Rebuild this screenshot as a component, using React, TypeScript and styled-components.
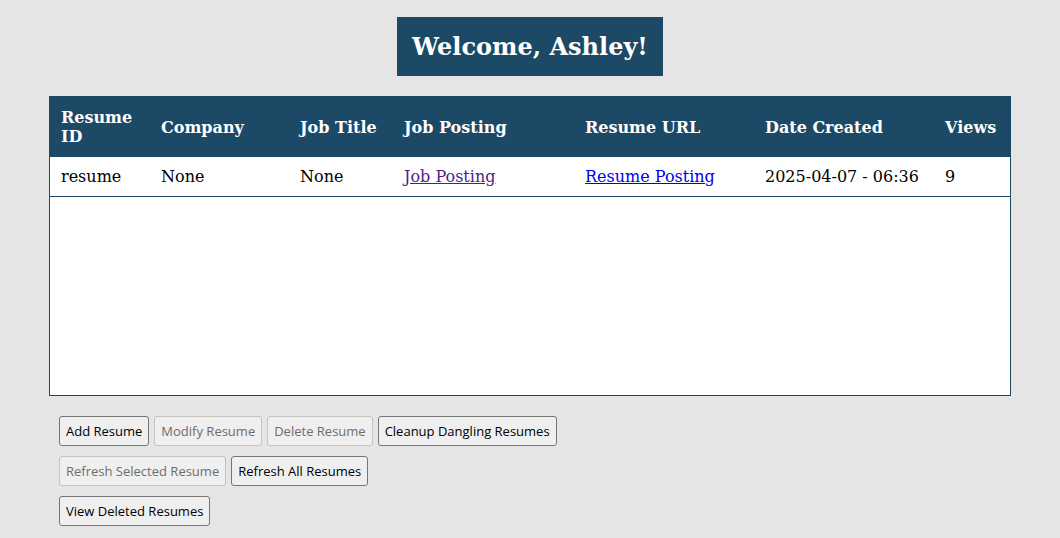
import React from "react";
import styled, { createGlobalStyle } from "styled-components";

const Global = createGlobalStyle`
  html, body { margin: 0; padding: 0; background: #e5e5e5; }
  body { font-family: "DejaVu Serif", serif; }
`;

const Page = styled.div`
  width: 962px;
  margin: 0 auto;
  padding-top: 17px;
  display: flex;
  flex-direction: column;
  align-items: center;
`;

const Banner = styled.h1`
  margin: 0 0 20px;
  background: #1c4966;
  color: #fff;
  font-family: "DejaVu Serif", serif;
  font-weight: bold;
  font-size: 24px;
  line-height: 59px;
  height: 59px;
  padding: 0 15px;
`;

const TableBox = styled.div`
  align-self: stretch;
  height: 298px;
  background: #fff;
  border: 1px solid #1c4966;
  overflow: auto;
`;

const Table = styled.table`
  width: 100%;
  border-collapse: collapse;
  table-layout: fixed;
  font-family: "DejaVu Serif", serif;
  font-size: 16px;
`;

const Th = styled.th<{ $w: number }>`
  width: ${(p) => p.$w}px;
  background: #1c4966;
  color: #fff;
  font-weight: bold;
  text-align: left;
  padding: 10px 11px;
  line-height: 19px;
  height: 60px;
  box-sizing: border-box;
`;

const Td = styled.td`
  padding: 10px 11px;
  line-height: 19px;
  color: #000;
  border-bottom: 1px solid #1c4966;
`;

const Link = styled.a<{ $visited?: boolean }>`
  color: ${(p) => (p.$visited ? "#551a8b" : "#0000ee")};
  text-decoration: underline;
`;

const Actions = styled.div`
  align-self: stretch;
  padding: 20px 10px 0;
  display: flex;
  flex-direction: column;
  gap: 10px;
`;

const Row = styled.div`
  display: flex;
  gap: 5px;
`;

const Btn = styled.button`
  font-family: "Open Sans", "Noto Sans", sans-serif;
  font-size: 13px;
  height: 30px;
  padding: 0 6px;
  background: #efefef;
  color: #000;
  border: 1px solid #767676;
  border-radius: 3px;
  &:disabled {
    color: #6d6d6d;
    border-color: #c3c3c3;
    background: #efefef;
  }
`;

const cols: [string, number][] = [
  ["Resume ID", 100],
  ["Company", 139],
  ["Job Title", 104],
  ["Job Posting", 181],
  ["Resume URL", 180],
  ["Date Created", 180],
  ["Views", 76],
];

export default function App() {
  return (
    <>
      <Global />
      <Page>
        <Banner>Welcome, Ashley!</Banner>
        <TableBox>
          <Table>
            <thead>
              <tr>
                {cols.map(([c, w]) => (
                  <Th key={c} $w={w}>
                    {c === "Resume ID" ? (
                      <>
                        Resume
                        <br />
                        ID
                      </>
                    ) : (
                      c
                    )}
                  </Th>
                ))}
              </tr>
            </thead>
            <tbody>
              <tr>
                <Td>resume</Td>
                <Td>None</Td>
                <Td>None</Td>
                <Td>
                  <Link $visited href="#">Job Posting</Link>
                </Td>
                <Td>
                  <Link href="#">Resume Posting</Link>
                </Td>
                <Td>2025-04-07 - 06:36</Td>
                <Td>9</Td>
              </tr>
            </tbody>
          </Table>
        </TableBox>
        <Actions>
          <Row>
            <Btn>Add Resume</Btn>
            <Btn disabled>Modify Resume</Btn>
            <Btn disabled>Delete Resume</Btn>
            <Btn>Cleanup Dangling Resumes</Btn>
          </Row>
          <Row>
            <Btn disabled>Refresh Selected Resume</Btn>
            <Btn>Refresh All Resumes</Btn>
          </Row>
          <Row>
            <Btn>View Deleted Resumes</Btn>
          </Row>
        </Actions>
      </Page>
    </>
  );
}
